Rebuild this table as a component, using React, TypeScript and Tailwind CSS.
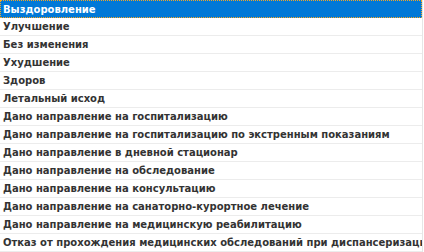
import React from 'react';

const outcomes = [
  'Выздоровление',
  'Улучшение',
  'Без изменения',
  'Ухудшение',
  'Здоров',
  'Летальный исход',
  'Дано направление на госпитализацию',
  'Дано направление на госпитализацию по экстренным показаниям',
  'Дано направление в дневной стационар',
  'Дано направление на обследование',
  'Дано направление на консультацию',
  'Дано направление на санаторно-курортное лечение',
  'Дано направление на медицинскую реабилитацию',
  'Отказ от прохождения медицинских обследований при диспансеризации',
];

const App: React.FC = () => {
  const selected = 0;

  return (
    <div className="w-[424px] h-[252px] overflow-hidden bg-white font-['DejaVu_Sans',Verdana,sans-serif]">
      <ul className="w-[423px] border-r border-[#e6e6e6]">
        {outcomes.map((label, i) => (
          <li
            key={label}
            className={
              i === selected
                ? 'h-[18px] px-[3px] flex items-center whitespace-nowrap overflow-hidden text-[10px] font-bold text-white bg-[#0078d7] outline-1 outline-dotted outline-[#f5a623] -outline-offset-1'
                : 'h-[18px] px-[3px] flex items-center whitespace-nowrap overflow-hidden text-[10px] font-bold text-[#333333] border-b border-[#ececec]'
            }
          >
            {label}
          </li>
        ))}
      </ul>
    </div>
  );
};

export default App;
